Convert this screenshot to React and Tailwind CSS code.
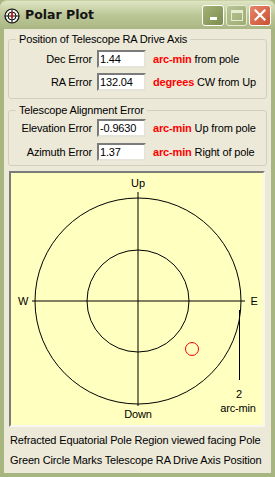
import React from 'react'

const font = { fontFamily: '"Liberation Sans", Arial, sans-serif' }

function TitleIcon() {
  return (
    <svg width="16" height="16" viewBox="0 0 16 16">
      <circle cx="8" cy="8" r="7" fill="#f4f4ee" stroke="#111" strokeWidth="1.2" />
      <circle cx="8" cy="8" r="4" fill="none" stroke="#111" strokeWidth="1" />
      <line x1="8" y1="1" x2="8" y2="15" stroke="#111" strokeWidth="1" />
      <line x1="1" y1="8" x2="15" y2="8" stroke="#111" strokeWidth="1" />
      <line x1="8" y1="4" x2="8" y2="10" stroke="#e01010" strokeWidth="1.6" />
    </svg>
  )
}

function Field({ label, value, unit, rest }) {
  return (
    <div className="flex items-center h-[18px]">
      <div className="w-[83px] text-right text-[11px] text-black">{label}</div>
      <div className="ml-[5px] w-[49px] h-[18px] bg-white border-2 border-t-[#7b7b7b] border-l-[#7b7b7b] border-b-[#e6e4d8] border-r-[#e6e4d8] px-[1px] text-[11px] leading-[14px] text-black">
        {value}
      </div>
      <div className="ml-[7px] text-[11px] text-black whitespace-nowrap">
        <span className="font-bold text-[#ff0000]">{unit}</span> {rest}
      </div>
    </div>
  )
}

function Group({ title, children, className }) {
  return (
    <fieldset className={`mx-[4px] border border-[#d0d0bf] rounded-[3px] px-0 ${className}`}>
      <legend className="ml-[7px] px-[3px] text-[11px] leading-[13px] text-black">{title}</legend>
      {children}
    </fieldset>
  )
}

function Plot() {
  const cx = 127
  const cy = 128
  return (
    <svg width="252" height="252" viewBox="0 0 252 252" style={font}>
      <circle cx={cx} cy={cy} r="103" fill="none" stroke="#000" strokeWidth="1" />
      <circle cx={cx} cy={cy} r="51" fill="none" stroke="#000" strokeWidth="1" />
      <line x1={cx} y1="19" x2={cx} y2="233" stroke="#000" strokeWidth="1" />
      <line x1="21" y1={cy} x2="234" y2={cy} stroke="#000" strokeWidth="1" />
      <circle cx="181" cy="176" r="6.5" fill="none" stroke="#ff0000" strokeWidth="1" />
      <line x1="228.5" y1="137" x2="228.5" y2="207" stroke="#000" strokeWidth="1" />
      <text x={cx} y="14" fontSize="11" textAnchor="middle">Up</text>
      <text x={cx} y="245" fontSize="11" textAnchor="middle">Down</text>
      <text x="12" y="132" fontSize="11" textAnchor="middle">W</text>
      <text x="243" y="132" fontSize="11" textAnchor="middle">E</text>
      <text x="228" y="225" fontSize="11" textAnchor="middle">2</text>
      <text x="227" y="239" fontSize="11" textAnchor="middle">arc-min</text>
    </svg>
  )
}

export default function App() {
  return (
    <div className="w-[275px] h-[477px] flex flex-col bg-[#a7b581] overflow-hidden tracking-[-0.15px]" style={font}>
      {/* Title bar */}
      <div className="h-[29px] shrink-0 flex items-center rounded-t-[7px] bg-linear-to-b from-[#dfe5c4] via-[#bcc797] to-[#aab784] border-t border-[#c9d2a6]">
        <div className="ml-[4px] mt-[1px]"><TitleIcon /></div>
        <div className="ml-[5px] font-bold text-[#151515] tracking-normal" style={{ fontFamily: '"DejaVu Sans", sans-serif', fontSize: 12.5 }}>Polar Plot</div>
        <div className="ml-auto mr-[4px] flex gap-[2px]">
          <div className="w-[22px] h-[21px] rounded-[3px] border border-white bg-linear-to-br from-[#a3b174] to-[#7d8d50] flex items-end justify-center pb-[5px]">
            <div className="w-[7px] h-[3px] bg-white" />
          </div>
          <div className="w-[21px] h-[21px] rounded-[3px] border border-[#e6ecd0] bg-linear-to-br from-[#b8c595] to-[#9dab74] flex items-center justify-center">
            <div className="w-[12px] h-[11px] border border-[#e6ecd0] border-t-[3px]" />
          </div>
          <div className="w-[22px] h-[21px] rounded-[3px] border border-white bg-linear-to-br from-[#e8856a] to-[#c9502f] flex items-center justify-center">
            <svg width="12" height="12" viewBox="0 0 12 12">
              <path d="M1.5 1.5 L10.5 10.5 M10.5 1.5 L1.5 10.5" stroke="#fff" strokeWidth="2.2" strokeLinecap="square" />
            </svg>
          </div>
        </div>
      </div>

      {/* Body */}
      <div className="flex-1 ml-[4px] mr-[4px] mb-[4px] bg-[#ece9d8] flex flex-col">
        <Group title="Position of Telescope RA Drive Axis" className="mt-[4px] h-[66px]">
          <div className="flex flex-col gap-[5px] mt-[4px]">
            <Field label="Dec Error" value="1.44" unit="arc-min" rest="from pole" />
            <Field label="RA Error" value="132.04" unit="degrees" rest="CW from Up" />
          </div>
        </Group>
        <Group title="Telescope Alignment Error" className="mt-[5px] h-[62px]">
          <div className="flex flex-col gap-[6px] mt-[2px]">
            <Field label="Elevation Error" value="-0.9630" unit="arc-min" rest="Up from pole" />
            <Field label="Azimuth Error" value="1.37" unit="arc-min" rest="Right of pole" />
          </div>
        </Group>
        <div className="mt-[5px] ml-[5px] w-[256px] h-[256px] bg-[#ffffc0] border-2 border-t-[#7b7b7b] border-l-[#7b7b7b] border-b-[#f7f6ef] border-r-[#f7f6ef]">
          <Plot />
        </div>
        <div className="ml-[6px] mt-[7px] text-[11px] leading-[13px] text-black whitespace-nowrap">Refracted Equatorial Pole Region viewed facing Pole</div>
        <div className="ml-[6px] mt-[7px] text-[11px] leading-[13px] text-black whitespace-nowrap">Green Circle Marks Telescope RA Drive Axis Position</div>
      </div>
    </div>
  )
}
